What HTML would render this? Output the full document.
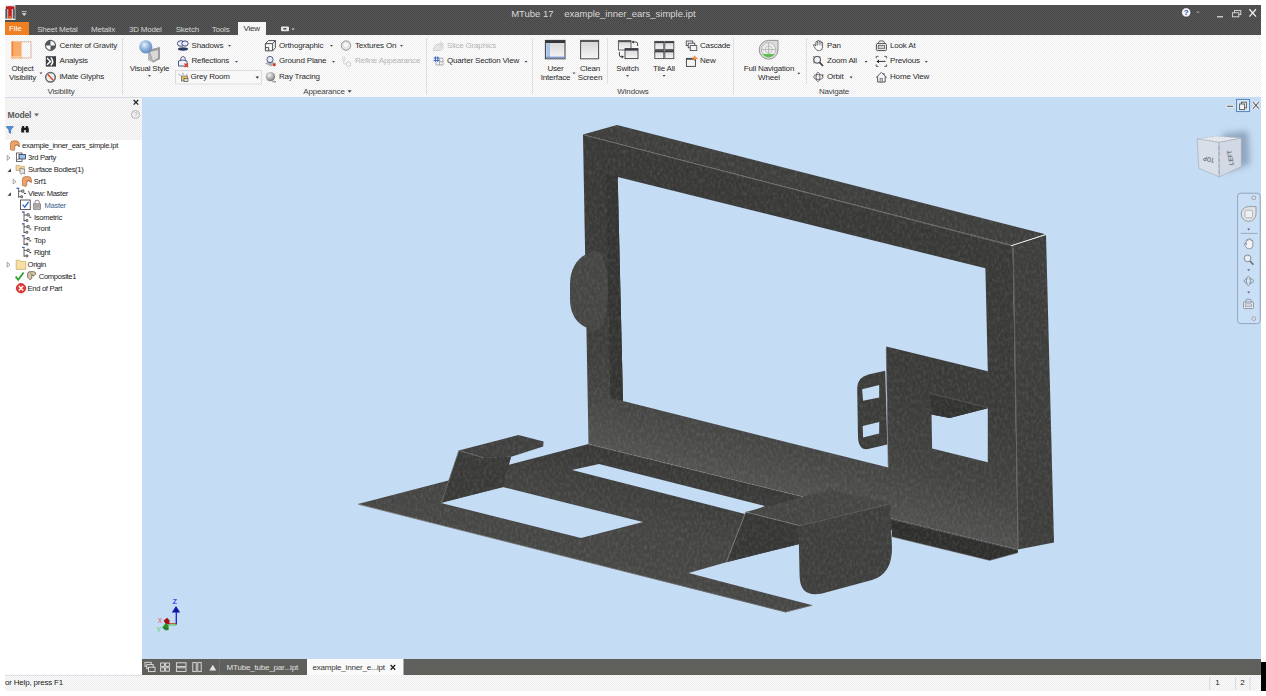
<!DOCTYPE html>
<html lang="en">
<head>
<meta charset="utf-8">
<title>MTube 17 example_inner_ears_simple.ipt</title>
<style>
html,body{margin:0;padding:0;}
body{width:1266px;height:696px;background:#fff;position:relative;overflow:hidden;font-family:"Liberation Sans",sans-serif;font-size:8.5px;color:#222;}
.abs{position:absolute;}
#titlebar{left:5px;top:5px;width:1256px;height:30.5px;background:conic-gradient(#565656 25%,#484848 0 50%,#565656 0 75%,#484848 0) 0 0/2px 2px;}
#title{left:506.2px;top:3px;color:#d8d8d8;font-size:9.5px;white-space:pre;}
.tab{top:17.5px;height:13px;line-height:13px;color:#d4d4d4;font-size:8px;letter-spacing:-0.2px;white-space:nowrap;}
#filetab{left:0;top:17px;width:24px;height:13.5px;background:#ee7f22;color:#fff;line-height:14px;font-size:8px;text-indent:4px;letter-spacing:-0.1px;}
#viewtab{left:232.6px;top:17px;width:28.3px;height:13.5px;background:#f6f6f6;color:#333;line-height:14px;font-size:8px;text-align:center;letter-spacing:-0.2px;}
#ribbon{left:5px;top:35px;width:1256px;height:62px;background:conic-gradient(#ffffff 25%,#eeeeee 0 50%,#ffffff 0 75%,#eeeeee 0) 0 0/2px 2px;}
.rt{white-space:nowrap;font-size:8px;letter-spacing:-0.17px;color:#2a2a2a;line-height:10px;}
.rc{white-space:nowrap;font-size:8px;letter-spacing:-0.17px;color:#2a2a2a;line-height:10px;text-align:center;transform:translateX(-50%);}
.pl{white-space:nowrap;font-size:8px;letter-spacing:-0.17px;color:#444;line-height:10px;transform:translateX(-50%);}
.sep{width:1px;background:#e0e0e0;top:38px;height:57px;}
.dis{color:#b4b4b4;}
.arr{font-size:5px;color:#444;line-height:5px;}
#left{left:5px;top:97px;width:137px;height:578px;background:#fff;}
#lefthead{left:0;top:0;width:137px;height:43px;background:conic-gradient(#fbfbfb 25%,#ebebeb 0 50%,#fbfbfb 0 75%,#ebebeb 0) 0 0/2px 2px;border-top:1px solid #d5dbe6;box-sizing:border-box;}
.tr{white-space:nowrap;font-size:7.6px;color:#222;line-height:10px;letter-spacing:-0.32px;}
.bt{white-space:nowrap;font-size:8px;line-height:10px;letter-spacing:-0.2px;}
#view{left:142px;top:97px;width:1119px;height:562px;background:#c4dcf4;}
#tabbar{left:142px;top:659px;width:1119px;height:16px;background:#5f5f5b;}
#status{left:5px;top:675px;width:1256px;height:15.7px;background:conic-gradient(#fdfdfd 25%,#ebebeb 0 50%,#fdfdfd 0 75%,#ebebeb 0) 0 0/2px 2px;}
#blackbar{left:1261px;top:662px;width:5px;height:29px;background:#000;}
</style>
</head>
<body>
<div id="titlebar" class="abs">
  <div id="title" class="abs">MTube 17    example_inner_ears_simple.ipt</div>
  <div id="filetab" class="abs">File</div>
  <div class="abs tab" style="left:32.2px">Sheet Metal</div>
  <div class="abs tab" style="left:86px">Metalix</div>
  <div class="abs tab" style="left:123.9px">3D Model</div>
  <div class="abs tab" style="left:170.7px">Sketch</div>
  <div class="abs tab" style="left:206.8px">Tools</div>
  <div id="viewtab" class="abs">View</div>
</div>
<div id="ribbon" class="abs"></div>
<!--RIBBONITEMS-->
<svg class="abs" style="left:0;top:0" width="1266" height="100" viewBox="0 0 1266 100">
<defs>
<radialGradient id="gsph" cx="0.4" cy="0.35" r="0.7"><stop offset="0" stop-color="#e8f2fc"/><stop offset="0.5" stop-color="#8fb4de"/><stop offset="1" stop-color="#5b86bd"/></radialGradient>
<radialGradient id="ggry" cx="0.4" cy="0.35" r="0.7"><stop offset="0" stop-color="#f4f4f4"/><stop offset="0.6" stop-color="#a8a8a8"/><stop offset="1" stop-color="#6c6c6c"/></radialGradient>
<linearGradient id="gwin" x1="0" y1="0" x2="0" y2="1"><stop offset="0" stop-color="#d4d4d4"/><stop offset="1" stop-color="#f6f6f6"/></linearGradient>
</defs>
<!-- Object visibility -->
<rect x="11.6" y="41.3" width="10" height="17.2" fill="#f9ab6c"/>
<rect x="11.6" y="41.3" width="1.6" height="17.2" fill="#ee8433"/>
<rect x="11.6" y="56" width="10" height="2.5" fill="#f7c58e"/>
<path d="M21.6,41.8 H31 V58 H21.6" fill="none" stroke="#b4553a" stroke-width="0.8" stroke-dasharray="1,1"/>
<path d="M39.5,72.5 h3 l-1.5,1.8z" fill="#444"/>
<!-- center of gravity -->
<circle cx="50.5" cy="45.4" r="5" fill="#fff" stroke="#555" stroke-width="1.1"/>
<path d="M50.5,45.4 V40.4 A5,5 0 0 0 45.5,45.4 Z M50.5,45.4 V50.4 A5,5 0 0 0 55.5,45.4 Z" fill="#50555c"/>
<!-- analysis -->
<rect x="45.8" y="56.2" width="10.2" height="10.4" fill="#3a3d42"/>
<path d="M47,58 L50.5,61.4 L47,64.8 M50.8,57.4 Q54.6,61.4 50.8,65.4" fill="none" stroke="#fff" stroke-width="1.5"/>
<!-- imate -->
<circle cx="50.5" cy="77.3" r="4.8" fill="#f0f0f0" stroke="#5f6670" stroke-width="1.5"/>
<path d="M47.6,74.2 L53.2,80.2" stroke="#e04a28" stroke-width="1.6"/>
<!-- visual style -->
<path d="M148,50 L160,47 L160,59 L153,62.5 L148,60 Z" fill="#b8b8b8"/>
<path d="M148,50 L160,47 L160,59 L153,62.5 Z" fill="#9c9c9c"/>
<path d="M150,52 L158,50 L158,58 L153,61 Z" fill="#d8d8d8"/>
<circle cx="145.8" cy="46.8" r="6.6" fill="url(#gsph)"/>
<path d="M148,75 h3 l-1.5,1.8z" fill="#444"/>
<!-- shadows -->
<ellipse cx="181" cy="43.5" rx="3.6" ry="2.8" fill="#eef" stroke="#2c3e66" stroke-width="0.9"/>
<ellipse cx="185" cy="43.5" rx="3.2" ry="2.6" fill="#eef" stroke="#2c3e66" stroke-width="0.9"/>
<ellipse cx="183" cy="49" rx="5" ry="1.7" fill="#2b3a5e"/>
<path d="M228,45 h3 l-1.5,1.8z" fill="#444"/>
<!-- reflections -->
<path d="M178.5,66 V61 Q183,59 187,61 V66 Z" fill="#f4f4f8" stroke="#3a4a78" stroke-width="0.9"/>
<path d="M180.5,60.5 Q180.5,56.5 183,56.5 Q185.5,56.5 185.5,60.5" fill="none" stroke="#3a4a78" stroke-width="0.9"/>
<path d="M184.5,63.5 l3.6,3.6 m0,-3.6 l-3.6,3.6" stroke="#e03020" stroke-width="1.2"/>
<path d="M235,61 h3 l-1.5,1.8z" fill="#444"/>
<!-- grey room dropdown -->
<rect x="175.5" y="70.5" width="86" height="13.5" fill="#f8f8f8" stroke="#d2d2d2" stroke-width="0.7"/>
<rect x="181.5" y="76" width="6" height="5" fill="#e8c060" stroke="#555" stroke-width="0.6"/>
<rect x="184" y="78.5" width="4" height="3" fill="#ddd" stroke="#444" stroke-width="0.6"/>
<path d="M178.5,74 l2,1.5 M183,72.8 v2 M187.5,74 l-1.6,1.5" stroke="#555" stroke-width="0.6"/>
<path d="M255.5,76.6 h3.6 l-1.8,2.2z" fill="#333"/>
<!-- orthographic -->
<path d="M265.4,43.6 H272.6 V50.8 H265.4 Z M265.4,43.6 L268.4,40.6 H275.4 V47.8 L272.6,50.8 M272.6,43.6 L275.4,40.6 M265.4,47.6 H268.6 V50.8" fill="none" stroke="#3c3c44" stroke-width="0.9"/>
<path d="M330,45 h3 l-1.5,1.8z" fill="#444"/>
<!-- ground plane -->
<path d="M265,63.5 L270,60.5 L276,63.5 L271,66.5 Z" fill="#b0b0b0"/>
<circle cx="270" cy="59.5" r="3.1" fill="#e8eef8" stroke="#3a4a78" stroke-width="0.9"/>
<rect x="273" y="63.5" width="2.6" height="2.6" fill="#e03020"/>
<path d="M332,61 h3 l-1.5,1.8z" fill="#444"/>
<!-- ray tracing -->
<circle cx="270.4" cy="76.6" r="4.7" fill="url(#ggry)"/>
<path d="M272.5,81.8 h3.5" stroke="#555" stroke-width="0.8"/>
<!-- textures on -->
<circle cx="346" cy="45.6" r="4.7" fill="#e2e2e2" stroke="#8c8c8c" stroke-width="0.9"/>
<circle cx="346" cy="45" r="2.2" fill="#f6f6f6"/>
<path d="M400,45 h3 l-1.5,1.8z" fill="#444"/>
<!-- refine appearance (disabled) -->
<rect x="342.5" y="57" width="2.6" height="3.4" rx="0.8" fill="none" stroke="#c4c4c4" stroke-width="0.7"/>
<path d="M343.8,60.5 v3.5 h2" fill="none" stroke="#c4c4c4" stroke-width="0.7"/>
<circle cx="348.6" cy="64" r="2.3" fill="none" stroke="#c4c4c4" stroke-width="0.8"/>
<!-- slice graphics (disabled) -->
<path d="M433.5,48 L436,44.5 L443,43.5 L443,48.5 L440.5,50.5 L433.5,50.5 Z M441,41 V47" fill="#e4e4e4" stroke="#c8c8c8" stroke-width="0.7"/>
<!-- quarter section -->
<path d="M433.6,58 H439.4 M433.6,60.4 H439.4 M435.4,56.4 V62 M437.8,56.4 V62" stroke="#2a5ab8" stroke-width="0.9" fill="none"/>
<path d="M439.6,58.2 H443 V65 H436 V62.2 M439.6,61.6 H443 M439.6,58.2 V65" stroke="#8a8e96" stroke-width="0.7" fill="none"/>
<path d="M524.5,61 h3 l-1.5,1.8z" fill="#444"/>
<!-- user interface -->
<rect x="545.4" y="40.4" width="19.6" height="18.4" fill="url(#gwin)" stroke="#3a3a40" stroke-width="1"/>
<rect x="545.4" y="40.4" width="19.6" height="2.6" fill="#34343a"/>
<rect x="546.4" y="43.4" width="3.6" height="14.6" fill="#a8c4ec"/>
<rect x="546" y="56.6" width="18.6" height="1.6" fill="#7c9cd0"/>
<path d="M572.5,72.5 h3 l-1.5,1.8z" fill="#444"/>
<!-- clean screen -->
<rect x="580.6" y="40.4" width="18" height="18.4" fill="url(#gwin)" stroke="#4a4a4e" stroke-width="1"/>
<rect x="580.6" y="40.4" width="18" height="1.6" fill="#55555a"/>
<!-- switch -->
<rect x="618.4" y="40.6" width="12.6" height="9.4" fill="url(#gwin)" stroke="#55555a" stroke-width="0.9"/>
<rect x="618.4" y="40.6" width="12.6" height="1.6" fill="#55555a"/>
<rect x="625" y="48.6" width="13" height="10" fill="url(#gwin)" stroke="#3a3a40" stroke-width="0.9"/>
<rect x="625" y="48.6" width="13" height="2" fill="#3a3a40"/>
<path d="M632.6,42 H636 Q637.6,42 637.6,44 V46" fill="none" stroke="#333" stroke-width="0.9"/>
<path d="M631.4,42 l2.4,-1.6 v3.2z" fill="#333"/>
<path d="M619.4,52 V55 Q619.4,56.8 621,56.8 H622.4" fill="none" stroke="#333" stroke-width="0.9"/>
<path d="M624,56.8 l-2.4,-1.6 v3.2z" fill="#333"/>
<path d="M626,75 h3 l-1.5,1.8z" fill="#444"/>
<!-- tile all -->
<g fill="url(#gwin)" stroke="#4a4a4e" stroke-width="0.9">
<rect x="654.8" y="41.4" width="9" height="8"/><rect x="664.8" y="41.4" width="9" height="8"/>
<rect x="654.8" y="50.6" width="9" height="8"/><rect x="664.8" y="50.6" width="9" height="8"/>
</g>
<g fill="#3e3e44"><rect x="654.8" y="41.4" width="9" height="1.7"/><rect x="664.8" y="41.4" width="9" height="1.7"/><rect x="654.8" y="50.6" width="9" height="1.7"/><rect x="664.8" y="50.6" width="9" height="1.7"/></g>
<path d="M662.5,75 h3 l-1.5,1.8z" fill="#444"/>
<!-- cascade -->
<g fill="#f4f4f4" stroke="#3e3e44" stroke-width="0.8">
<rect x="686.2" y="41" width="6.6" height="4.6"/><rect x="688.2" y="43.2" width="6.6" height="4.6"/><rect x="690.2" y="45.6" width="6.6" height="5"/>
</g>
<!-- new -->
<rect x="686.4" y="58.4" width="9" height="8" fill="#f4f4f4" stroke="#3e3e44" stroke-width="0.9"/>
<rect x="686.4" y="58.4" width="9" height="1.3" fill="#3e3e44"/>
<path d="M694.6,55.8 l1,1.8 l1.9,0.6 l-1.9,0.8 l-1,1.8 l-1,-1.8 l-1.8,-0.8 l1.8,-0.6z" fill="#f6a040" stroke="#e05818" stroke-width="0.5"/>
<!-- full nav wheel -->
<path d="M768.5,40.4 H778 V50 A9.4,9.4 0 1 1 768.5,40.4 Z" fill="#dcdcdc" stroke="#8a8a8a" stroke-width="0.9"/>
<circle cx="768.6" cy="49.8" r="7.2" fill="#ececec" stroke="#a8a8a8" stroke-width="0.7"/>
<path d="M762.6,54 A7.2,7.2 0 0 0 774.6,54 Z" fill="#58c048"/>
<path d="M768.6,43 V54 M761.6,49.6 H775.6" stroke="#a4a4a4" stroke-width="0.7"/>
<circle cx="768.6" cy="49.6" r="3.6" fill="none" stroke="#b0b0b0" stroke-width="0.6"/>
<path d="M797.3,72.8 h3 l-1.5,1.8z" fill="#444"/>
<!-- pan (hand) -->
<path d="M815.8,46 V42.6 Q815.8,41.6 816.6,41.6 Q817.4,41.6 817.4,42.6 V41.4 Q817.4,40.4 818.3,40.4 Q819.2,40.4 819.2,41.4 V41.8 Q819.2,40.9 820.1,40.9 Q821,40.9 821,41.9 V42.8 Q821,42 821.8,42 Q822.6,42 822.6,43 V47 Q822.6,50.6 819.4,50.6 H818.4 Q816.6,50.6 815.4,48.6 L813.6,45.6 Q813.2,44.6 814,44.4 Q814.8,44.2 815.8,46 Z" fill="#fafafa" stroke="#3a3a3e" stroke-width="0.75"/>
<path d="M817.4,42.6 V45.4 M819.2,41.8 V45.2 M821,42.8 V45.4" stroke="#3a3a3e" stroke-width="0.6"/>
<!-- zoom all -->
<rect x="813.6" y="56.6" width="6.4" height="6.4" fill="none" stroke="#888" stroke-width="0.6"/>
<circle cx="817.2" cy="59.8" r="3.4" fill="#eef2f8" fill-opacity="0.7" stroke="#3a3a3e" stroke-width="0.9"/>
<path d="M819.6,62.4 L823,66" stroke="#3a3a3e" stroke-width="1.6"/>
<path d="M864.6,61 h3 l-1.5,1.8z" fill="#444"/>
<!-- orbit -->
<ellipse cx="818.4" cy="77" rx="4.6" ry="2.4" fill="none" stroke="#4a4a50" stroke-width="0.8"/>
<ellipse cx="818" cy="77" rx="2" ry="4.6" fill="none" stroke="#4a4a50" stroke-width="0.8"/>
<path d="M821.5,74.2 l2.2,0.6 l-1.2,1.8z" fill="#4a4a50"/>
<path d="M849.6,76.6 h3 l-1.5,1.8z" fill="#444"/>
<!-- look at -->
<rect x="876.4" y="43.6" width="10" height="7" rx="1" fill="#f6f6f6" stroke="#3a3a3e" stroke-width="0.9"/>
<rect x="878.2" y="45.4" width="6.4" height="3.4" fill="#d0d0d0" stroke="#3a3a3e" stroke-width="0.6"/>
<path d="M878,43.6 L879.6,40.8 M885,43.6 L883.4,40.8 M879.6,41 H883.4" stroke="#3a3a3e" stroke-width="0.8" fill="none"/>
<!-- previous -->
<path d="M876.2,58.4 V56.4 H878.4 M884.2,56.4 H886.6 V58.4 M886.6,64.4 V66.4 H884.2 M878.4,66.4 H876.2 V64.4" fill="none" stroke="#3a3a3e" stroke-width="0.8"/>
<path d="M877.6,61.4 H885.6" stroke="#222" stroke-width="0.9"/>
<path d="M876.4,61.4 l2.6,-1.9 v3.8z" fill="#222"/>
<path d="M924.8,61 h3 l-1.5,1.8z" fill="#444"/>
<!-- home view -->
<path d="M876,77.6 L881.4,72.4 L886.8,77.6 M877.6,76.6 V82 H885.2 V76.6 M884,73 V75" fill="#f4f4f4" stroke="#4a4a50" stroke-width="0.9"/>
<rect x="880" y="78.4" width="2.6" height="3.6" fill="#c8c8c8" stroke="#4a4a50" stroke-width="0.5"/>
<!-- appearance label arrow -->
<path d="M347.5,90.2 h4.2 l-2.1,2.6z" fill="#444"/>
<!-- title-bar ctrl -->
</svg>
<div class="abs rc" style="left:22.5px;top:63.5px;">Object</div>
<div class="abs rc" style="left:22.5px;top:72.8px;">Visibility</div>
<div class="abs rt" style="left:59.5px;top:40.5px;">Center of Gravity</div>
<div class="abs rt" style="left:59.5px;top:56.4px;">Analysis</div>
<div class="abs rt" style="left:59.5px;top:72.2px;">iMate Glyphs</div>
<div class="abs pl" style="left:61px;top:86.5px;">Visibility</div>
<div class="abs rc" style="left:149.5px;top:63.5px;">Visual Style</div>
<div class="abs rt" style="left:191.5px;top:40.5px;">Shadows</div>
<div class="abs rt" style="left:191.5px;top:56.4px;">Reflections</div>
<div class="abs rt" style="left:190.5px;top:72.2px;">Grey Room</div>
<div class="abs rt" style="left:279px;top:40.5px;">Orthographic</div>
<div class="abs rt" style="left:279px;top:56.4px;">Ground Plane</div>
<div class="abs rt" style="left:279px;top:72.2px;">Ray Tracing</div>
<div class="abs rt" style="left:355px;top:40.5px;">Textures On</div>
<div class="abs rt dis" style="left:355px;top:56.4px;">Refine Appearance</div>
<div class="abs pl" style="left:324px;top:86.5px;">Appearance</div>
<div class="abs rt dis" style="left:447px;top:40.5px;">Slice Graphics</div>
<div class="abs rt" style="left:447px;top:56.4px;">Quarter Section View</div>
<div class="abs rc" style="left:555.5px;top:63.5px;">User</div>
<div class="abs rc" style="left:555.5px;top:72.8px;">Interface</div>
<div class="abs rc" style="left:590px;top:63.5px;">Clean</div>
<div class="abs rc" style="left:590px;top:72.8px;">Screen</div>
<div class="abs rc" style="left:627.5px;top:63.5px;">Switch</div>
<div class="abs rc" style="left:664px;top:63.5px;">Tile All</div>
<div class="abs rt" style="left:700px;top:40.5px;">Cascade</div>
<div class="abs rt" style="left:700px;top:56.4px;">New</div>
<div class="abs pl" style="left:633px;top:86.5px;">Windows</div>
<div class="abs rc" style="left:769px;top:63.5px;">Full Navigation</div>
<div class="abs rc" style="left:769px;top:72.8px;">Wheel</div>
<div class="abs rt" style="left:827px;top:40.5px;">Pan</div>
<div class="abs rt" style="left:827px;top:56.4px;">Zoom All</div>
<div class="abs rt" style="left:827px;top:72.2px;">Orbit</div>
<div class="abs rt" style="left:890px;top:40.5px;">Look At</div>
<div class="abs rt" style="left:890px;top:56.4px;">Previous</div>
<div class="abs rt" style="left:890px;top:72.2px;">Home View</div>
<div class="abs pl" style="left:834px;top:86.5px;">Navigate</div>
<div class="abs sep" style="left:122.2px"></div>
<div class="abs sep" style="left:426.2px"></div>
<div class="abs sep" style="left:532.2px"></div>
<div class="abs sep" style="left:733.2px"></div>
<div class="abs sep" style="left:606.5px;top:38px;height:46px"></div>
<div class="abs sep" style="left:806.3px;top:38px;height:46px"></div>
<!--/RIBBONITEMS-->
<div id="left" class="abs">
  <div id="lefthead" class="abs"></div>
<!--TREE-->
<svg class="abs" style="left:-5px;top:-97px" width="146" height="400" viewBox="0 0 146 400">
<path d="M133.6,100 l4.6,4.6 m0,-4.6 l-4.6,4.6" stroke="#222" stroke-width="1.3"/>
<path d="M34,113.6 h5 l-2.5,3z" fill="#666"/>
<path d="M6.2,126.6 H13.4 L10.6,130 V133.4 L9,132.4 V130 Z" fill="#4a8fdc" stroke="#2a5fa8" stroke-width="0.6"/>
<path d="M21.2,132.6 v-4 l1.2,-2.6 h1.6 l0.6,2 h0.8 l0.6,-2 h1.6 l1.2,2.6 v4 h-3 v-2.6 h-1.6 v2.6 z" fill="#1e1e1e"/>
<g transform="translate(9.8,140.2) scale(1.0)"><path d="M0.6,9.4 V3.6 Q0.6,0.6 4,0.6 H6.4 Q9.4,0.6 9.6,4 V6.4 L7,4.6 L5,5.4 V9.6 L3.4,10.4 Z" fill="#eda46a" stroke="#9a5a2a" stroke-width="0.6"/><path d="M5,5.4 L7,4.6 L9.6,6.4" fill="none" stroke="#7a3a1a" stroke-width="0.5"/></g>
<g transform="translate(21.8,176) scale(1.0)"><path d="M0.6,9.4 V3.6 Q0.6,0.6 4,0.6 H6.4 Q9.4,0.6 9.6,4 V6.4 L7,4.6 L5,5.4 V9.6 L3.4,10.4 Z" fill="#eda46a" stroke="#9a5a2a" stroke-width="0.6"/><path d="M5,5.4 L7,4.6 L9.6,6.4" fill="none" stroke="#7a3a1a" stroke-width="0.5"/></g>
<path d="M7.2,155.5 L10.0,157.9 L7.2,160.3 Z" fill="#fff" stroke="#666" stroke-width="0.6"/>
<path d="M11.0,168.4 V172 H7.3999999999999995 Z" fill="#444"/>
<path d="M13.200000000000001,179.2 L16.0,181.6 L13.200000000000001,184.0 Z" fill="#fff" stroke="#666" stroke-width="0.6"/>
<path d="M11.0,192.20000000000002 V195.8 H7.3999999999999995 Z" fill="#444"/>
<path d="M7.2,262.3 L10.0,264.7 L7.2,267.09999999999997 Z" fill="#fff" stroke="#666" stroke-width="0.6"/>
<rect x="16.4" y="153" width="5.6" height="8.6" fill="#fff" stroke="#333" stroke-width="0.7"/><rect x="19" y="154.4" width="6.6" height="4.6" fill="#9cc0ee" stroke="#223" stroke-width="0.7"/><path d="M17,160 l3,-2" stroke="#333" stroke-width="0.6"/>
<path d="M16,165.4 h4 l1,1 h3.4 v4 h-8.4z" fill="#f3d9a0" stroke="#a08040" stroke-width="0.5"/><path d="M20,168 l4.6,1.4 v4.6 l-2,-1 l-1.4,1.4 l-1.2,-2z" fill="#e8e8e8" stroke="#555" stroke-width="0.6"/>
<g transform="translate(16.4,187.79999999999998)" fill="none" stroke="#222" stroke-width="0.7"><path d="M0.4,0.6 h2.4 M2.2,1.4 v8.4 M2.2,3.4 h3 M5.4,2.2 h2 v2.2 h-2z M2.2,9 h2 M4.4,8 h1.6 v1.8 h-1.6z" /><path d="M7.6,5.6 h1.8" stroke-width="1"/><path d="M0.2,0.4 h2.6" stroke="#2a5ab8" stroke-width="0.9"/></g>
<g transform="translate(21.8,211.6)" fill="none" stroke="#222" stroke-width="0.7"><path d="M0.4,0.6 h2.4 M2.2,1.4 v8.4 M2.2,3.4 h3 M5.4,2.2 h2 v2.2 h-2z M2.2,9 h2 M4.4,8 h1.6 v1.8 h-1.6z" /><path d="M7.6,5.6 h1.8" stroke-width="1"/><path d="M0.2,0.4 h2.6" stroke="#2a5ab8" stroke-width="0.9"/></g>
<g transform="translate(21.8,223.4)" fill="none" stroke="#222" stroke-width="0.7"><path d="M0.4,0.6 h2.4 M2.2,1.4 v8.4 M2.2,3.4 h3 M5.4,2.2 h2 v2.2 h-2z M2.2,9 h2 M4.4,8 h1.6 v1.8 h-1.6z" /><path d="M7.6,5.6 h1.8" stroke-width="1"/><path d="M0.2,0.4 h2.6" stroke="#2a5ab8" stroke-width="0.9"/></g>
<g transform="translate(21.8,235.29999999999998)" fill="none" stroke="#222" stroke-width="0.7"><path d="M0.4,0.6 h2.4 M2.2,1.4 v8.4 M2.2,3.4 h3 M5.4,2.2 h2 v2.2 h-2z M2.2,9 h2 M4.4,8 h1.6 v1.8 h-1.6z" /><path d="M7.6,5.6 h1.8" stroke-width="1"/><path d="M0.2,0.4 h2.6" stroke="#2a5ab8" stroke-width="0.9"/></g>
<g transform="translate(21.8,247.0)" fill="none" stroke="#222" stroke-width="0.7"><path d="M0.4,0.6 h2.4 M2.2,1.4 v8.4 M2.2,3.4 h3 M5.4,2.2 h2 v2.2 h-2z M2.2,9 h2 M4.4,8 h1.6 v1.8 h-1.6z" /><path d="M7.6,5.6 h1.8" stroke-width="1"/><path d="M0.2,0.4 h2.6" stroke="#2a5ab8" stroke-width="0.9"/></g>
<rect x="20.6" y="200" width="9.6" height="9.6" fill="#fff" stroke="#333" stroke-width="0.8"/><path d="M22.6,204.6 l2.2,2.6 l3.8,-5.4" fill="none" stroke="#2a6ac8" stroke-width="1.3"/>
<rect x="33.6" y="203.8" width="7" height="5.6" fill="#b8b8b8" stroke="#666" stroke-width="0.6"/><path d="M35,203.8 v-1.6 q0,-2 2.1,-2 q2.1,0 2.1,2 v1.6" fill="none" stroke="#777" stroke-width="0.9"/><path d="M34.4,205.4 h5.4 M34.4,207 h5.4" stroke="#888" stroke-width="0.5"/>
<path d="M16.2,260.2 h3.6 l1,1.2 h5 v8 h-9.6z" fill="#f6dfa4" stroke="#b89850" stroke-width="0.6"/>
<path d="M15.6,276.6 l2.6,3.2 l5.4,-7.4" fill="none" stroke="#28a428" stroke-width="1.7"/>
<path d="M27.6,277.4 v-3.4 q0,-2.4 2.6,-2.4 h3 q2.6,0 2.6,2.6 l-2,1.6 l-2,-0.8 v3.4 l-1.8,1.4z" fill="#d8c4a0" stroke="#555" stroke-width="0.7"/><path d="M30,272.6 l3.6,3.4" stroke="#555" stroke-width="0.5"/>
<circle cx="21" cy="288.2" r="4.7" fill="#e83a3a" stroke="#b01818" stroke-width="0.7"/><path d="M18.8,286 l4.4,4.4 m0,-4.4 l-4.4,4.4" stroke="#fff" stroke-width="1.4"/>
</svg>
<div class="abs tr" style="left:17.1px;top:44.2px;">example_inner_ears_simple.ipt</div>
<div class="abs tr" style="left:23.1px;top:56.2px;">3rd Party</div>
<div class="abs tr" style="left:23.1px;top:67.9px;">Surface Bodies(1)</div>
<div class="abs tr" style="left:28.700000000000003px;top:79.9px;">Srf1</div>
<div class="abs tr" style="left:23.1px;top:91.6px;">View: Master</div>
<div class="abs tr" style="left:39.5px;top:103.5px;color:#3d5f8f">Master</div>
<div class="abs tr" style="left:29px;top:115.5px;">Isometric</div>
<div class="abs tr" style="left:29px;top:127.3px;">Front</div>
<div class="abs tr" style="left:29px;top:139.2px;">Top</div>
<div class="abs tr" style="left:29px;top:150.9px;">Right</div>
<div class="abs tr" style="left:22.6px;top:163.0px;">Origin</div>
<div class="abs tr" style="left:33.8px;top:174.5px;">Composite1</div>
<div class="abs tr" style="left:22.6px;top:186.6px;">End of Part</div>
<div class="abs" style="left:2.6px;top:13.2px;font-size:8.6px;font-weight:bold;color:#5a5a5a;letter-spacing:-0.25px;line-height:10px">Model</div>
<div class="abs" style="left:126.2px;top:13px;width:7px;height:7px;border:0.8px solid #b0b0b0;border-radius:50%;font-size:6.5px;line-height:7.4px;text-align:center;color:#a8a8a8">?</div>
<!--/TREE-->
</div>
<div id="view" class="abs"></div>
<!--MODEL-->
<svg class="abs" style="left:0;top:0" width="1266" height="696" viewBox="0 0 1266 696">
<defs>
<filter id="tex" filterUnits="userSpaceOnUse" x="340" y="110" width="740" height="520" color-interpolation-filters="sRGB">
  <feTurbulence type="fractalNoise" baseFrequency="0.38 0.24" numOctaves="2" seed="7" result="n"/>
  <feColorMatrix in="n" type="matrix" values="0 0 0 0 1  0 0 0 0 1  0 0 0 0 1  0.22 0 0 0 -0.09" result="lite"/>
  <feComposite in="lite" in2="SourceAlpha" operator="in" result="liteC"/>
  <feColorMatrix in="n" type="matrix" values="0 0 0 0 0  0 0 0 0 0  0 0 0 0 0  0 -0.3 0 0 0.125" result="dark"/>
  <feComposite in="dark" in2="SourceAlpha" operator="in" result="darkC"/>
  <feMerge><feMergeNode in="SourceGraphic"/><feMergeNode in="liteC"/><feMergeNode in="darkC"/></feMerge>
</filter>
<linearGradient id="gfr" gradientUnits="userSpaceOnUse" x1="583" y1="134.5" x2="508.5" y2="423.4">
<stop offset="0" stop-color="#393937"/><stop offset="0.55" stop-color="#3b3b39"/><stop offset="0.8" stop-color="#434341"/><stop offset="0.9" stop-color="#4b4b49"/><stop offset="1" stop-color="#535351"/></linearGradient>
<linearGradient id="gpl" gradientUnits="userSpaceOnUse" x1="588.5" y1="444" x2="559.6" y2="556">
<stop offset="0" stop-color="#393937"/><stop offset="0.2" stop-color="#3d3d3b"/><stop offset="0.5" stop-color="#444442"/><stop offset="1" stop-color="#484846"/></linearGradient>
</defs>
<g id="model" filter="url(#tex)">
  <!-- base plate -->
  <path fill="url(#gpl)" fill-rule="evenodd" d="M358,504 L588.5,444 L1017.9,549.6 L1017.9,552.6 L989.7,560.2 L892,536.5 L892,530 L798.5,544.3 L726.3,562.2 L688.6,573 L812.5,605.3 L785.6,612.2 Z
   M441,503 L502.5,487 L643,522 L581,538 Z
   M572,470 L599,464 L765,506 L745,514 Z"/>
  <!-- dark strip of plate under frame at right -->
  <path fill="#2f2f2d" d="M892,520 L1017.9,550.6 L1017.9,552.6 L989.7,560.2 L892,536.5 Z"/>
  <!-- left bracket -->
  <path fill="#414140" d="M458.8,450.4 L518.4,435.1 L543.5,441.5 L543.2,446.6 L511.2,456.8 L484,458 Z"/>
  <path fill="#3a3a38" d="M458.8,450.4 L484,457.5 L511.2,456.8 L502.6,487.2 L441.3,502.6 Z"/>
  <path fill="none" stroke="#777775" stroke-width="0.7" d="M441.6,502 L458.8,450.6 L484,457.8"/>
  <!-- frame front -->
  <path fill="url(#gfr)" fill-rule="evenodd" d="M583,134.5 L1012.6,245.3 L1017.9,549.6 L588.5,444 Z
   M617.7,177 L985.4,268.3 L987.8,371.2 L886.2,346.5 L888.3,467.6 L623,401 Z
   M931.5,414.5 L949.6,418.1 L985.8,408.8 L987.8,408.4 L987.8,462.3 L932.1,448.6 Z"/>
  <path fill="#343432" d="M606,174 L617.7,177 L623,401 L610.5,397.8 Z"/>
  <!-- frame ear left -->
  <path fill="#464644" d="M600,251 C581,251 570,266 570,284 L570,299 C570,318 581,330 600,330 C606,321 608,303 608,290 C608,276 606,260 600,251 Z"/>
  <!-- top face -->
  <path fill="#3f3f3d" d="M583,134.5 L617,125 L1045.5,234.3 L1012.6,245.3 Z"/>
  <!-- right face -->
  <path fill="#3e3e3c" d="M1012.6,245.3 L1046,235 L1054,542.6 L1017.9,549.6 Z"/>
  <!-- panel square hole + shelf -->
  <path fill="#333331" d="M930.5,393.3 L987.8,407.4 L985.8,408.8 L949.6,418.1 L931.5,414.5 Z"/>
  <!-- small bracket w/ two holes -->
  <path fill="#3c3c3a" fill-rule="evenodd" d="M885.2,370.8 L868.5,374.6 Q857.2,377.5 857.2,388 L858,437 Q858.5,450.5 868,449 L887.3,444.6 Z
    M862.1,389.3 L879.2,384.9 L879.2,397.4 L863.1,400.8 Z
    M862.7,426.1 L879.2,422.1 L879.2,433.6 L863.1,437.6 Z"/>
  <!-- right bracket -->
  <path fill="#464644" d="M745.7,512 L830.8,489.4 L890,503.4 L799.5,525.6 Z"/>
  <path fill="#373735" d="M745.7,512 L799.5,525.6 L798.5,544.3 L726.3,562.2 Z"/>
  <path fill="#3f3f3d" d="M798.5,525.6 L890,503.4 L892,548 Q892,574 872,580 L822,593.5 Q800,598 799.6,576 Z"/>
</g>
<g fill="none">
  <!-- edge highlights -->
  <path stroke="#70706e" stroke-width="0.8" d="M358.4,504.3 L785.6,612 L812.3,605.2"/>
  <path stroke="#62625f" stroke-width="0.6" d="M892.2,536.8 L989.7,560.4 L1017.8,552.8"/>
  <path stroke="#7c7c7a" stroke-width="0.7" d="M584,135 L1011,245.6"/>
  <path stroke="#f0f0f0" stroke-width="1" d="M1011,245.8 L1045.5,234.6"/>
  <path stroke="#6e6e6c" stroke-width="0.8" d="M1013.4,248 L1018.2,549"/>
  <path stroke="#8a8a88" stroke-width="0.8" d="M726.3,562.2 L745.7,512 L799.5,525.6"/>
  <path stroke="#6a6a68" stroke-width="0.7" d="M799.5,525.8 L890,503.8"/>
  <path stroke="#9a9a98" stroke-width="0.6" stroke-dasharray="1.2,1.2" d="M589,444.4 L803,496.8"/>
  <path stroke="#8a8a88" stroke-width="0.6" stroke-dasharray="1.2,1.2" d="M892,519.6 L1017.6,550"/>
  <path stroke="#6a6a68" stroke-width="0.6" d="M930.5,393.5 L987.8,407.6"/>
  <path stroke="#5e5e5c" stroke-width="0.6" d="M886.3,349 L888.2,466"/>
</g>
</svg>
<!--/MODEL-->
<!--WIDGETS-->
<svg class="abs" style="left:0;top:0" width="1266" height="696" viewBox="0 0 1266 696">
<defs>
<filter id="blur3" x="-50%" y="-50%" width="200%" height="200%"><feGaussianBlur stdDeviation="3"/></filter>
</defs>
<!-- viewport window controls -->
<rect x="1226.4" y="105.2" width="7" height="2.2" fill="#777" stroke="#f4f4f4" stroke-width="0.8"/>
<rect x="1236.6" y="99.4" width="13" height="12.2" fill="#d4e6f8" stroke="#4a7ab8" stroke-width="0.9"/>
<rect x="1241.4" y="102.2" width="5" height="5.6" fill="#f4f4f4" stroke="#555" stroke-width="0.9"/>
<rect x="1239.6" y="104" width="5" height="5.6" fill="#f4f4f4" stroke="#555" stroke-width="0.9"/>
<path d="M1253,102.2 l5.8,6.4 m0,-6.4 l-5.8,6.4" stroke="#fff" stroke-width="2.6"/>
<path d="M1253,102.2 l5.8,6.4 m0,-6.4 l-5.8,6.4" stroke="#666" stroke-width="1.2"/>
<!-- viewcube -->
<path d="M1222,134 L1248,131 L1250,164 L1226,172 Z" fill="#8398b2" opacity="0.8" filter="url(#blur3)"/>
<path d="M1197.2,138.8 L1216,136 L1241.3,138.1 L1219,142.4 Z" fill="#e4e8ee" stroke="#a8b0bc" stroke-width="0.6" stroke-dasharray="2,1"/>
<path d="M1197.2,138.8 L1219,142.4 L1219.3,176.9 L1198.9,168.3 Z" fill="#d9dfe8" stroke="#a0a8b4" stroke-width="0.6"/>
<path d="M1219,142.4 L1241.3,138.1 L1241.3,166.8 L1219.3,176.9 Z" fill="#d2d9e4" stroke="#a0a8b4" stroke-width="0.6"/>
<path d="M1219.1,146 V174" stroke="#9aa2ae" stroke-width="0.8" stroke-dasharray="4,2"/>
<text transform="translate(1209.2,157.2) rotate(192) scale(1,1.25)" font-family="Liberation Sans, sans-serif" font-size="5.4" font-weight="bold" fill="#6c7684" text-anchor="middle">TOP</text>
<text transform="translate(1232.6,157.5) rotate(-98) scale(1,1.1)" font-family="Liberation Sans, sans-serif" font-size="6" font-weight="bold" fill="#6c7684" text-anchor="middle">LEFT</text>
<!-- nav bar -->
<rect x="1237.6" y="193.2" width="22.6" height="130.4" rx="3" fill="#c9dff5" stroke="#8696ac" stroke-width="0.8"/>
<circle cx="1253.8" cy="197.8" r="1.9" fill="#dde6f0" stroke="#8a8a8a" stroke-width="0.7"/>
<circle cx="1253.8" cy="318.6" r="1.9" fill="#dde6f0" stroke="#8a8a8a" stroke-width="0.7"/>
<path d="M1248.6,206.6 H1256 V214 A7.4,7.4 0 1 1 1248.6,206.6 Z" fill="#dfe4ea" stroke="#8c8c8c" stroke-width="0.8"/>
<rect x="1245" y="210.2" width="7.6" height="7.6" rx="1.6" fill="#eef0f2" stroke="#9c9c9c" stroke-width="0.7"/>
<path d="M1247.2,228.6 h3 l-1.5,1.8z" fill="#5a6470"/>
<path d="M1240.4,233.4 H1257.6" stroke="#8696ac" stroke-width="0.7"/>
<!-- hand -->
<path d="M1246.2,245 V240.6 q0,-0.9 0.8,-0.9 q0.8,0 0.8,0.9 V239.6 q0,-0.9 0.85,-0.9 q0.85,0 0.85,0.9 V240 q0,-0.9 0.85,-0.9 q0.85,0 0.85,0.9 V241 q0,-0.8 0.8,-0.8 q0.8,0 0.8,0.9 V245.4 q0,3.4 -3,3.4 h-1 q-1.8,0 -2.8,-1.8 l-1.6,-2.8 q-0.4,-0.9 0.3,-1.1 q0.7,-0.2 1.6,1.5 z" fill="#f2f4f6" stroke="#70767e" stroke-width="0.7"/>
<!-- zoom -->
<circle cx="1247.6" cy="258.4" r="3.4" fill="#e6eef8" stroke="#7a8088" stroke-width="0.9"/>
<path d="M1250,261 L1253.4,264.6" stroke="#6a7078" stroke-width="1.6"/>
<path d="M1247.2,269.2 h3 l-1.5,1.8z" fill="#5a6470"/>
<!-- orbit -->
<ellipse cx="1248.8" cy="281" rx="4.6" ry="2.3" fill="none" stroke="#7a8088" stroke-width="0.8"/>
<ellipse cx="1248.4" cy="281" rx="2" ry="4.6" fill="#e6eef8" fill-opacity="0.6" stroke="#7a8088" stroke-width="0.8"/>
<path d="M1247.2,291.6 h3 l-1.5,1.8z" fill="#5a6470"/>
<!-- look at -->
<rect x="1243.6" y="302" width="9.8" height="6.6" rx="0.8" fill="#eef0f4" stroke="#7a8088" stroke-width="0.8"/>
<rect x="1245.4" y="303.8" width="6.2" height="3" fill="#d4d8de" stroke="#7a8088" stroke-width="0.5"/>
<path d="M1245,302 l1.6,-2.8 h3.8 l1.6,2.8" stroke="#7a8088" stroke-width="0.7" fill="none"/>
<!-- axis triad -->
<path d="M176.3,612 V624.6" stroke="#1c1cd0" stroke-width="1.3"/>
<path d="M176,606 L180.2,612.4 H171.8 Z" fill="#1414a8"/>
<path d="M176.3,623.6 H169" stroke="#c05030" stroke-width="1"/>
<path d="M176.3,625 H169" stroke="#40c840" stroke-width="1"/>
<path d="M163.6,620.6 L167.2,617.8 L169.6,620.4 L169.2,624.4 L165.6,624 Z" fill="#a81010"/>
<path d="M162.2,627.6 L165.8,623 L168.6,625.6 L168.6,630 L165.4,630.6 Z" fill="#209820"/>
<path d="M164,628.4 h4" stroke="#505050" stroke-width="1"/>
<text x="172.4" y="604.2" font-family="Liberation Sans, sans-serif" font-size="7.4" font-weight="bold" fill="#4848f0">Z</text>
<text x="157.8" y="622.8" font-family="Liberation Sans, sans-serif" font-size="6.6" fill="#f05050">X</text>
<text x="156.4" y="631.6" font-family="Liberation Sans, sans-serif" font-size="6.6" fill="#50d050">Y</text>
<!-- title bar controls -->
<rect x="5" y="5" width="10.4" height="15" fill="#e8e8e8"/>
<rect x="6" y="6.4" width="8.4" height="2.6" fill="#b81818"/>
<rect x="8.2" y="6.4" width="3.6" height="12" fill="#c82020"/>
<rect x="5.4" y="9" width="2" height="9.6" fill="#555"/><rect x="12.8" y="9" width="2" height="9.6" fill="#555"/>
<rect x="9.2" y="16" width="1.6" height="3" fill="#f08030"/>
<path d="M21.8,11.6 h4.8" stroke="#ddd" stroke-width="0.8"/><path d="M21.8,13.2 h4.8 l-2.4,2.8z" fill="#ddd"/>
<rect x="281" y="26.6" width="8" height="4.6" rx="1" fill="#e8e8e8"/><rect x="283.4" y="28" width="3" height="1.6" fill="#555"/>
<path d="M291.6,28.6 h3 l-1.5,1.6z" fill="#ddd"/>
<circle cx="1186.2" cy="12.4" r="4.6" fill="#f4f6fa" stroke="#222" stroke-width="0.5"/>
<text x="1186.2" y="15.2" font-family="Liberation Sans, sans-serif" font-size="8" font-weight="bold" fill="#2848b0" text-anchor="middle">?</text>
<path d="M1196.8,12.2 h2.4" stroke="#ccc" stroke-width="0.8"/>
<path d="M1217,16.8 h6" stroke="#e4e4e4" stroke-width="1.2"/>
<rect x="1234.4" y="10.6" width="6.4" height="4" fill="none" stroke="#e0e0e0" stroke-width="0.9"/>
<rect x="1232.4" y="12.8" width="6.4" height="4" fill="#4b4b4b" stroke="#e0e0e0" stroke-width="0.9"/>
<path d="M1249.4,9.2 l6.6,7.4 m0,-7.4 l-6.6,7.4" stroke="#f0f0f0" stroke-width="1.3"/>
</svg>
<!--/WIDGETS-->
<div id="tabbar" class="abs"></div>
<!--TABS-->
<div id="status" class="abs"></div>
<div id="blackbar" class="abs"></div>
<!--STATUS-->
<svg class="abs" style="left:0;top:650px" width="1266" height="46" viewBox="0 650 1266 46">
<rect x="307" y="659" width="96.5" height="16" fill="#fafafa"/>
<path d="M219.6,659 V675" stroke="#74746f" stroke-width="0.8"/>
<g fill="#5f5f5b" stroke="#e2e2e2" stroke-width="0.9">
<rect x="145" y="662.3" width="6.2" height="4.2"/><rect x="146.8" y="664.6" width="6.4" height="4"/><rect x="148.5" y="667.2" width="6.5" height="4.4"/>
<rect x="160.6" y="663" width="3.8" height="3.4"/><rect x="165.6" y="663" width="3.8" height="3.4"/><rect x="160.6" y="667.8" width="3.8" height="3.4"/><rect x="165.6" y="667.8" width="3.8" height="3.4"/>
<rect x="176.4" y="662.8" width="9.6" height="3.6"/><rect x="176.4" y="667.8" width="9.6" height="3.6"/>
<rect x="192.8" y="662.6" width="3.4" height="9"/><rect x="197.8" y="662.6" width="3.4" height="9"/>
</g>
<path d="M209.4,670.4 L212.8,664.8 L216.2,670.4 Z" fill="#e6e6e6"/>
<path d="M390.6,665 l4.6,4.8 m0,-4.8 l-4.6,4.8" stroke="#222" stroke-width="1.3"/>
<path d="M5,675.3 H142" stroke="#d4d8e2" stroke-width="0.9"/>
<path d="M1209.7,677 V690 M1235.6,677 V690 M1250,677 V690" stroke="#d0d0d0" stroke-width="0.8"/>
</svg>
<div class="abs bt" style="left:226.6px;top:662.6px;color:#e0e0e0">MTube_tube_par...ipt</div>
<div class="abs bt" style="left:312.5px;top:662.6px;color:#333">example_inner_e...ipt</div>
<div class="abs bt" style="left:5px;top:678.2px;color:#222">or Help, press F1</div>
<div class="abs bt" style="left:1215.2px;top:678.2px;color:#222">1</div>
<div class="abs bt" style="left:1240.2px;top:678.2px;color:#222">2</div>
<!--/STATUS-->
</body>
</html>
